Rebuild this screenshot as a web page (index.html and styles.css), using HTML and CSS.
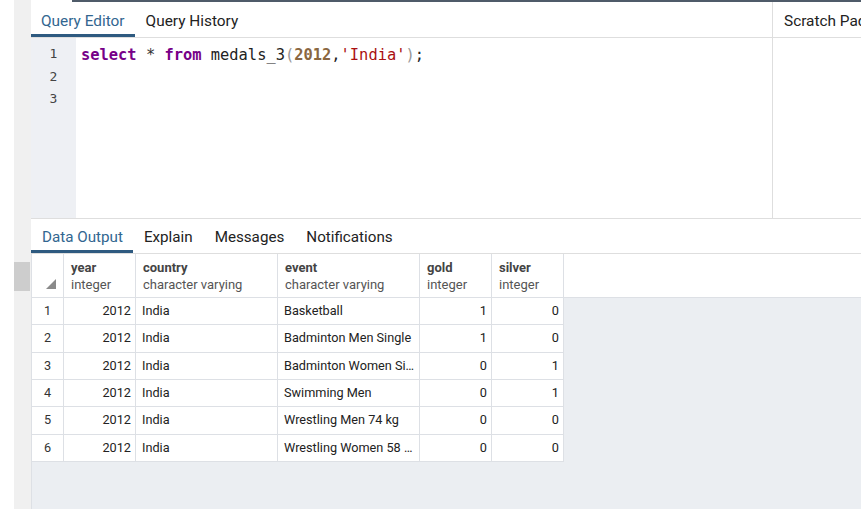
FILE: index.html
```html
<!DOCTYPE html>
<html>
<head>
<meta charset="utf-8">
<link rel="stylesheet" href="styles.css">
</head>
<body>
<div class="app">
  <div class="gap"></div>
  <div class="track"><div class="thumb"></div></div>
  <div class="main">
    <div class="topline"></div>
    <div class="top">
      <div class="editor-panel">
        <div class="tabs">
          <div class="tab active">Query Editor</div>
          <div class="tab">Query History</div>
        </div>
        <div class="editor">
          <div class="gutter"><div class="ln">1</div><div class="ln">2</div><div class="ln">3</div></div>
          <div class="code">
            <div class="cl"><span class="kw">select</span> <span class="op">*</span> <span class="kw">from</span> medals_3<span class="br">(</span><span class="num">2012</span>,<span class="str">'India'</span><span class="br">)</span>;</div>
            <div class="cl">&nbsp;</div>
            <div class="cl">&nbsp;</div>
          </div>
        </div>
      </div>
      <div class="scratch">
        <div class="tabs">
          <div class="tab scratch-tab">Scratch Pad</div>
        </div>
      </div>
    </div>
    <div class="bottom">
      <div class="tabs">
        <div class="tab active">Data Output</div>
        <div class="tab">Explain</div>
        <div class="tab">Messages</div>
        <div class="tab">Notifications</div>
      </div>
      <div class="grid">
        <div class="ghead">
          <div class="hc c-rn"><span class="corner"></span></div>
          <div class="hc c-int"><b>year</b><span>integer</span></div>
          <div class="hc c-txt"><b>country</b><span>character varying</span></div>
          <div class="hc c-txt"><b>event</b><span>character varying</span></div>
          <div class="hc c-int"><b>gold</b><span>integer</span></div>
          <div class="hc c-int"><b>silver</b><span>integer</span></div>
        </div>
        <div class="gbody">
          <div class="row"><div class="dc c-rn">1</div><div class="dc c-int r">2012</div><div class="dc c-txt">India</div><div class="dc c-txt">Basketball</div><div class="dc c-int r">1</div><div class="dc c-int r">0</div></div>
          <div class="row"><div class="dc c-rn">2</div><div class="dc c-int r">2012</div><div class="dc c-txt">India</div><div class="dc c-txt">Badminton Men Single</div><div class="dc c-int r">1</div><div class="dc c-int r">0</div></div>
          <div class="row"><div class="dc c-rn">3</div><div class="dc c-int r">2012</div><div class="dc c-txt">India</div><div class="dc c-txt">Badminton Women Single</div><div class="dc c-int r">0</div><div class="dc c-int r">1</div></div>
          <div class="row"><div class="dc c-rn">4</div><div class="dc c-int r">2012</div><div class="dc c-txt">India</div><div class="dc c-txt">Swimming Men</div><div class="dc c-int r">0</div><div class="dc c-int r">1</div></div>
          <div class="row"><div class="dc c-rn">5</div><div class="dc c-int r">2012</div><div class="dc c-txt">India</div><div class="dc c-txt">Wrestling Men 74 kg</div><div class="dc c-int r">0</div><div class="dc c-int r">0</div></div>
          <div class="row"><div class="dc c-rn">6</div><div class="dc c-int r">2012</div><div class="dc c-txt">India</div><div class="dc c-txt">Wrestling Women 58 kg</div><div class="dc c-int r">0</div><div class="dc c-int r">0</div></div>
        </div>
      </div>
    </div>
  </div>
</div>
</body>
</html>
```

FILE: styles.css
```css
* { box-sizing: border-box; }
html, body { margin: 0; padding: 0; }
body {
  width: 861px;
  height: 509px;
  overflow: hidden;
  background: #fff;
  font-family: Roboto, "Liberation Sans", sans-serif;
  color: #222;
}
.app { display: flex; height: 509px; }
.gap { width: 14px; background: #fff; }
.track { width: 17px; background: #f0f0f0; padding-top: 262px; }
.thumb { width: 16px; height: 29px; background: #cdcdcd; }
.main { flex: 1; display: flex; flex-direction: column; min-width: 0; }
.topline { height: 2px; margin-left: 41px; background: #4f5b69; }
.top { display: flex; height: 217px; border-bottom: 1px solid #dedede; }
.editor-panel { width: 742px; display: flex; flex-direction: column; border-right: 1px solid #dedede; }
.scratch { flex: 1; min-width: 0; overflow: hidden; }
.tabs { display: flex; height: 36px; border-bottom: 1px solid #dedede; flex-shrink: 0; }
.tab {
  height: 35px;
  padding: 0 10px;
  font-size: 15.4px;
  line-height: 38px;
  color: #222;
  white-space: nowrap;
  border-bottom: 3px solid transparent;
}
.tab.active { color: #326690; border-bottom-color: #2e5a80; }
.tab.active + .tab { padding-left: 11px; }
.scratch-tab { padding-left: 11px; }
.editor { flex: 1; display: flex; }
.gutter { width: 45px; background: #eef0f4; padding-top: 5px; }
.ln {
  height: 22.5px; line-height: 22.5px; text-align: center;
  font-family: "DejaVu Sans Mono", "Liberation Mono", monospace;
  font-size: 13px; color: #444;
}
.code {
  padding: 6px 0 0 5px;
  font-family: "DejaVu Sans Mono", "Liberation Mono", monospace;
  font-size: 15.4px;
  color: #222;
}
.cl { height: 22.5px; line-height: 22.5px; white-space: pre; }
.kw { color: #770088; font-weight: bold; }
.op { color: #333; }
.br { color: #999; }
.num { color: #8a6640; font-weight: bold; }
.str { color: #aa1111; }
.bottom { flex: 1; display: flex; flex-direction: column; min-height: 0; }
.bottom .tabs { height: 35px; }
.bottom .tab { height: 34px; line-height: 36px; padding: 0 11px; font-size: 15.2px; }
.bottom .tab:first-child { padding-left: 11px; padding-right: 10px; }
.bottom .tab.active + .tab { padding-left: 11px; }
.grid { flex: 1; background: #ebeef2; border-left: 1px solid #dde0e5; display: flex; flex-direction: column; }
.ghead { display: flex; height: 44px; background: #fff; border-bottom: 1px solid #dde0e5; }
.hc {
  height: 43px;
  border-right: 1px solid #dde0e5;
  padding: 5px 0 0 7px;
  font-size: 13px;
  line-height: 17px;
  display: flex; flex-direction: column;
  position: relative;
}
.hc b { color: #444; font-weight: bold; }
.hc span { color: #555; }
.c-rn { width: 32px; }
.c-int { width: 72px; }
.c-txt { width: 142px; }
.corner {
  position: absolute; left: 14px; top: 25px;
  width: 0; height: 0;
  border-style: solid; border-width: 0 0 10px 10px;
  border-color: transparent transparent #8a8a8a transparent;
}
.gbody { display: flex; flex-direction: column; }
.row { display: flex; height: 27.33px; }
.dc {
  background: #fff;
  border-right: 1px solid #dde0e5;
  border-bottom: 1px solid #dde0e5;
  font-size: 12.7px;
  line-height: 26px;
  padding: 0 2px 0 6px;
  white-space: nowrap; overflow: hidden; text-overflow: ellipsis;
  color: #222;
}
.dc.c-rn { text-align: center; padding: 0; color: #333; }
.dc.r { text-align: right; padding: 0 4px 0 7px; }
```
